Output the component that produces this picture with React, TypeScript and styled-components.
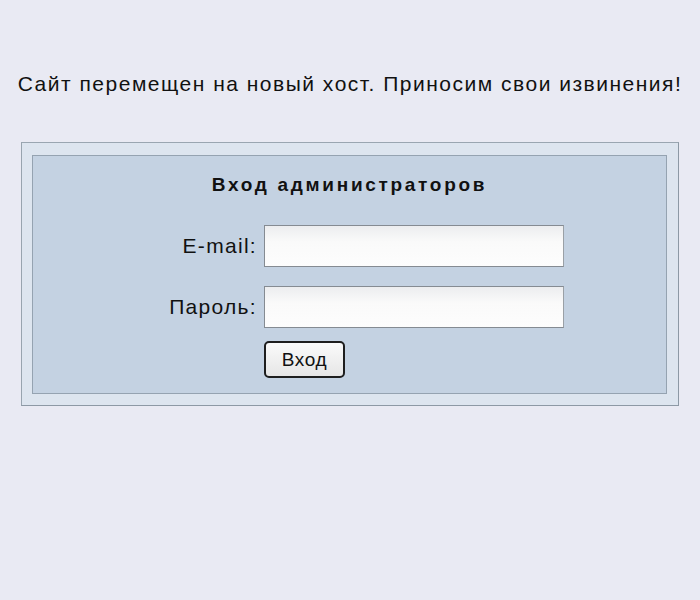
import React from "react"
import styled, { createGlobalStyle } from "styled-components"

const GlobalStyle = createGlobalStyle`
  html, body {
    margin: 0;
    padding: 0;
    background: #e9eaf3;
  }
  body {
    font-family: "Liberation Sans", Arial, sans-serif;
    color: #111;
  }
`

const Page = styled.div`
  width: 700px;
  height: 600px;
  padding-top: 72px;
  box-sizing: border-box;
`

const Notice = styled.p`
  margin: 0 0 46px;
  text-align: center;
  font-size: 21px;
  line-height: 24px;
  letter-spacing: 1.5px;
`

const Frame = styled.div`
  margin: 0 21px;
  padding: 12px 11px 11px 10px;
  background: #dde5ef;
  border: 1px solid #8d99a5;
  border-top-color: #9aa6b1;
  border-left-color: #98a4af;
`

const Panel = styled.div`
  background: #c4d2e2;
  border: 1px solid #95a3b1;
  height: 219px;
  padding-top: 18px;
  box-sizing: content-box;
`

const Title = styled.h2`
  margin: 0 0 29px;
  text-align: center;
  font-size: 19px;
  line-height: 22px;
  font-weight: bold;
  letter-spacing: 2.7px;
`

const Form = styled.form`
  display: grid;
  grid-template-columns: 224px 300px;
  column-gap: 7px;
  row-gap: 19px;
  align-items: center;
`

const Label = styled.label`
  text-align: right;
  font-size: 21px;
  letter-spacing: 1.3px;
`

const Field = styled.input`
  box-sizing: border-box;
  width: 300px;
  height: 42px;
  margin: 0;
  border: 1px solid #858b92;
  border-right-color: #9aa0a6;
  background: linear-gradient(#ecedef, #fafafa 40%, #fdfdfd);
  outline: none;
`

const Button = styled.button`
  grid-column: 2;
  justify-self: start;
  margin-top: -6px;
  width: 81px;
  height: 37px;
  border: 2px solid #1e1e1e;
  border-radius: 5px;
  background: linear-gradient(#fafafa, #e6e6e6);
  font-family: "Liberation Sans", Arial, sans-serif;
  font-size: 19px;
  letter-spacing: 0.6px;
  color: #111;
  padding: 0;
`

export default function App() {
  return (
    <>
      <GlobalStyle />
      <Page>
        <Notice>Сайт перемещен на новый хост. Приносим свои извинения!</Notice>
        <Frame>
          <Panel>
            <Title>Вход администраторов</Title>
            <Form onSubmit={e => e.preventDefault()}>
              <Label htmlFor="email">E-mail:</Label>
              <Field id="email" type="text" />
              <Label htmlFor="pass">Пароль:</Label>
              <Field id="pass" type="password" />
              <Button type="submit">Вход</Button>
            </Form>
          </Panel>
        </Frame>
      </Page>
    </>
  )
}
